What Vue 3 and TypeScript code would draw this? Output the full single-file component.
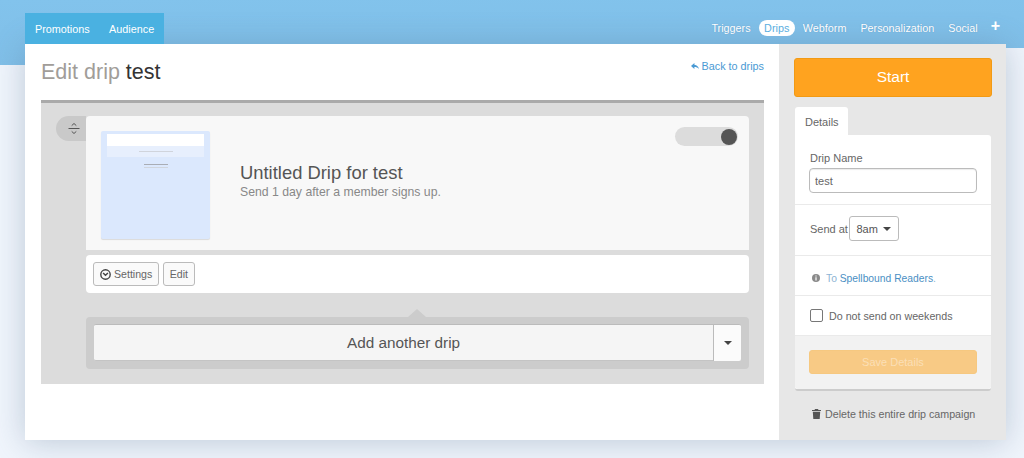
<template>
  <div class="page">
    <div class="top-nav">
      <div class="left-tabs">
        <a v-for="tab in leftTabs" :key="tab">{{ tab }}</a>
      </div>
      <div class="right-tabs">
        <a v-for="tab in rightTabs" :key="tab" :class="{ active: tab === 'Drips' }">{{ tab }}</a>
        <span class="plus">+</span>
      </div>
    </div>

    <div class="shell">
      <main class="main">
        <div class="head">
          <h1>Edit drip <span>test</span></h1>
          <a class="back">
            <svg width="8" height="7" viewBox="0 0 8 7"><path d="M3.4 0 0 2.9l3.4 3V4.100c1.900 0 3.400.4 4.600 2.200C7.600 3.900 6 2 3.400 1.800z" fill="#4a9ad4" /></svg>
            Back to drips
          </a>
        </div>

        <section class="panel">
          <div class="row">
            <div class="handle">
              <svg width="12" height="13" viewBox="0 0 12 13" fill="none" stroke="#555" stroke-width="1">
                <path d="M3.700 3.600 6 1.500 8.300 3.600M3.700 9.400 6 11.500 8.300 9.400" />
                <path d="M.5 6.500h11" />
              </svg>
            </div>
            <div class="stack">
              <div class="card">
                <div class="thumb">
                  <div class="thumb-head">
                    <div class="thumb-white"></div>
                    <div class="thumb-line"></div>
                  </div>
                  <div class="thumb-foot"></div>
                  <div class="thumb-foot small"></div>
                </div>
                <div class="info">
                  <h2>Untitled Drip for test</h2>
                  <p>Send 1 day after a member signs up.</p>
                </div>
                <div class="toggle"><span></span></div>
              </div>
              <div class="actions">
                <button type="button" class="btn">
                  <svg width="11" height="11" viewBox="0 0 11 11" fill="none" stroke="#444" stroke-width="1.400">
                    <circle cx="5.500" cy="5.500" r="4.700" />
                    <path d="M3.100 3.900 5.500 6.300 7.900 3.900" />
                  </svg>
                  Settings
                </button>
                <button type="button" class="btn">Edit</button>
              </div>
              <div class="add-bar">
                <button type="button" class="add-main">Add another drip</button>
                <button type="button" class="add-caret"><i class="caret"></i></button>
              </div>
            </div>
          </div>
        </section>
      </main>

      <aside class="side">
        <button type="button" class="start">Start</button>
        <div class="tab">Details</div>
        <div class="details">
          <div class="sec sec-name">
            <label>Drip Name</label>
            <input type="text" value="test" />
          </div>
          <div class="sec sec-send">
            <span>Send at</span>
            <div class="select">8am <i class="caret"></i></div>
          </div>
          <div class="sec sec-to">
            <svg width="8" height="8" viewBox="0 0 8 8"><circle cx="4" cy="4" r="4" fill="#8a8a8a" /><path d="M3.400 1.500h1.200v1H3.400zM3.400 3.300h1.200v3.200H3.400z" fill="#fff" /></svg>
            <span class="to">To <a>Spellbound Readers</a>.</span>
          </div>
          <div class="sec sec-week">
            <i class="check"></i>
            <span>Do not send on weekends</span>
          </div>
          <div class="sec-save">
            <button type="button" class="save">Save Details</button>
          </div>
        </div>
        <div class="delete">
          <svg width="9" height="10" viewBox="0 0 9 10"><path d="M3 0h3l.500 1H9v1H0V1h2.500zM.800 2.800h7.400L7.700 10H1.300z" fill="#555" /></svg>
          Delete this entire drip campaign
        </div>
      </aside>
    </div>
  </div>
</template>

<script setup lang="ts">
const leftTabs: string[] = ['Promotions', 'Audience']
const rightTabs: string[] = ['Triggers', 'Drips', 'Webform', 'Personalization', 'Social']
</script>

<style>
body {
  margin: 0;
}
</style>

<style scoped>
.page {
  box-sizing: border-box;
  width: 1024px;
  height: 458px;
  padding: 13px 18px 0 25px;
  overflow: hidden;
  font-family: "Liberation Sans", Arial, sans-serif;
  background:
    linear-gradient(179.05deg, #82c3ec 0, #80bfe8 65px, transparent 65px),
    #f0f5fc;
}

.top-nav {
  display: flex;
  justify-content: space-between;
  align-items: flex-start;
  height: 31px;
}

.left-tabs {
  display: flex;
  height: 31px;
  padding: 0 9.500px 0 10px;
  gap: 19.500px;
  background: #4ab1e1;
  align-items: center;
  font-size: 10.800px;
  color: #fff;
}

.right-tabs {
  display: flex;
  align-items: center;
  height: 31px;
  padding-right: 6px;
  font-size: 10.800px;
  color: #fff;
  margin-top: -1px;
}

.right-tabs a {
  padding: 2px 6px;
  margin-right: 2px;
  border-radius: 9px;
  text-shadow: 0 0 1px rgba(60, 120, 170, 0.6);
}

.right-tabs a.active {
  padding: 2px 5.500px;
  background: #fff;
  color: #5aaee0;
  text-shadow: none;
}

.plus {
  margin-left: 5px;
  font-size: 16px;
  font-weight: bold;
  line-height: 16px;
  margin-top: -4px;
}

.shell {
  display: flex;
  height: 396px;
  box-shadow: 0 2px 30px rgba(80, 110, 140, 0.32);
}

.main {
  box-sizing: border-box;
  width: 754px;
  padding: 0 15px 0 16px;
  background: #fff;
}

.head {
  display: flex;
  justify-content: space-between;
  height: 56px;
}

h1 {
  margin: 15px 0 0;
  font-size: 21.500px;
  font-weight: normal;
  line-height: 26px;
  color: #a19d99;
}

h1 span {
  color: #333;
}

.back {
  margin-top: 15px;
  font-size: 10.800px;
  line-height: 14px;
  color: #4a9ad4;
}

.panel {
  box-sizing: border-box;
  height: 284px;
  padding: 13px 15px 0;
  border-top: 3px solid #aaa;
  background: #dcdcdc;
}

.row {
  display: flex;
  align-items: flex-start;
}

.handle {
  display: flex;
  align-items: center;
  justify-content: center;
  box-sizing: border-box;
  width: 30px;
  height: 25px;
  padding-left: 5px;
  border-radius: 13px 0 0 13px;
  background: #c9c9c9;
}

.stack {
  flex: 1;
}

.card {
  display: flex;
  box-sizing: border-box;
  height: 134px;
  padding: 15px 11px 0 15px;
  border-radius: 4px 4px 0 0;
  background: #f8f8f8;
}

.thumb {
  box-sizing: border-box;
  width: 109px;
  height: 108px;
  padding: 3px 0 0;
  border-radius: 2px;
  background: #dbe8fd;
  box-shadow: 0 1px 1px rgba(0, 0, 0, 0.12);
}

.thumb-head {
  margin: 0 6px;
  height: 23px;
  background: #e7effd;
}

.thumb-white {
  height: 12px;
  background: #fff;
}

.thumb-line {
  width: 34px;
  height: 1px;
  margin: 5px auto 0;
  background: #d0d4dc;
}

.thumb-foot {
  width: 24px;
  height: 1px;
  margin: 7px auto 0;
  background: #a9adb5;
}

.thumb-foot.small {
  margin-top: 2px;
  background: #d0d5dd;
}

.info {
  flex: 1;
  margin: 32px 0 0 30px;
}

h2 {
  margin: 0;
  font-size: 18.400px;
  font-weight: normal;
  line-height: 20px;
  color: #555;
}

.info p {
  margin: 2px 0 0;
  font-size: 12.250px;
  line-height: 15px;
  color: #888;
}

.toggle {
  display: flex;
  justify-content: flex-end;
  align-items: center;
  box-sizing: border-box;
  width: 63px;
  height: 19px;
  margin-top: -4px;
  padding-right: 1px;
  border-radius: 10px;
  background: #dcdcdc;
}

.toggle span {
  width: 16px;
  height: 16px;
  border-radius: 50%;
  background: #555;
}

.actions {
  display: flex;
  gap: 4px;
  align-items: center;
  height: 38px;
  margin-top: 5px;
  padding-left: 7px;
  border-radius: 4px;
  background: #fff;
}

.btn {
  display: flex;
  align-items: center;
  gap: 3px;
  height: 24px;
  padding: 0 5.500px 0 6px;
  border: 1px solid #bbb;
  border-radius: 3px;
  background: #fafafa;
  font: 10.600px "Liberation Sans", Arial, sans-serif;
  color: #666;
}

.add-bar {
  position: relative;
  display: flex;
  box-sizing: border-box;
  height: 52px;
  margin-top: 24px;
  padding: 7px 8px 8px;
  border-radius: 4px;
  background: #ccc;
}

.add-bar::before {
  content: "";
  position: absolute;
  left: 322px;
  top: -8px;
  border-left: 9px solid transparent;
  border-right: 9px solid transparent;
  border-bottom: 8px solid #ccc;
}

.add-main {
  flex: 1;
  border: 0;
  border-top: 1px solid #bbb;
  border-bottom: 1px solid #c4c4c4;
  border-radius: 2px 0 0 2px;
  background: #f5f5f5;
  font: 15.300px "Liberation Sans", Arial, sans-serif;
  color: #555;
}

.add-caret {
  display: flex;
  align-items: center;
  justify-content: center;
  width: 28px;
  border: 0;
  border-top: 1px solid #bbb;
  border-left: 1px solid #bbb;
  border-radius: 0 2px 2px 0;
  background: #fbfbfb;
}

.caret {
  display: inline-block;
  border-left: 4px solid transparent;
  border-right: 4px solid transparent;
  border-top: 4.500px solid #444;
}

.side {
  box-sizing: border-box;
  width: 227px;
  padding: 14px 0 0 15px;
  background: #e7e7e7;
}

.start {
  display: block;
  box-sizing: border-box;
  width: 198px;
  height: 39px;
  padding-bottom: 3px;
  border: 1px solid #f29a14;
  border-radius: 3px;
  background: #ffa31f;
  font: 15.500px "Liberation Sans", Arial, sans-serif;
  color: #fff;
}

.tab {
  box-sizing: border-box;
  width: 53px;
  height: 28px;
  margin: 10px 0 0 1px;
  padding: 9px 0 0 10px;
  border-radius: 3px 3px 0 0;
  background: #fff;
  font-size: 11px;
  line-height: 13px;
  color: #666;
}

.details {
  width: 196px;
  margin-left: 1px;
  border-radius: 0 3px 3px 3px;
  border-bottom: 2px solid #ccc;
  background: #fff;
  font-size: 11px;
  color: #666;
}

.sec {
  box-sizing: border-box;
  padding: 0 14px;
  border-bottom: 1px solid #eaeaea;
}

.sec-name {
  height: 70px;
  padding-top: 16px;
}

.sec-name label {
  display: block;
  margin-left: 1px;
  line-height: 14px;
  margin-bottom: 3px;
}

.sec-name input {
  display: block;
  box-sizing: border-box;
  width: 168px;
  height: 25px;
  padding: 0 5px;
  border: 1px solid #bbb;
  border-radius: 4px;
  outline: none;
  box-shadow: inset 0 1px 1px rgba(0, 0, 0, 0.08);
  font: 11px "Liberation Sans", Arial, sans-serif;
  color: #666;
}

.sec-send {
  display: flex;
  align-items: center;
  gap: 1.500px;
  height: 51px;
  padding-bottom: 3px;
  padding-left: 15px;
}

.select {
  display: flex;
  align-items: center;
  justify-content: space-between;
  box-sizing: border-box;
  width: 50px;
  height: 25px;
  padding: 0 7px 0 6px;
  border: 1px solid #bbb;
  border-radius: 3px;
  color: #555;
}

.sec-to {
  display: flex;
  align-items: center;
  gap: 6px;
  height: 40px;
  padding-top: 5px;
  padding-left: 17px;
  font-size: 10.300px;
}

.to {
  color: #8db4d4;
}

.to a {
  color: #4a8fc4;
}

.sec-week {
  display: flex;
  align-items: center;
  gap: 6px;
  height: 40px;
  font-size: 10.700px;
}

.check {
  box-sizing: border-box;
  width: 13px;
  height: 13px;
  margin-left: 1px;
  border: 1px solid #777;
  border-radius: 2px;
  background: #fff;
}

.sec-save {
  box-sizing: border-box;
  height: 53px;
  padding: 14px 14px 0;
  border-radius: 0 0 3px 3px;
  background: #f2f2f2;
}

.save {
  display: block;
  width: 168px;
  height: 24px;
  border: 1px solid #f6c880;
  border-radius: 3px;
  background: #f8ca85;
  font: 11px "Liberation Sans", Arial, sans-serif;
  color: #fbdfb6;
}

.delete {
  display: flex;
  align-items: center;
  gap: 4px;
  margin: 16px 0 0 18px;
  font-size: 10.700px;
  line-height: 14px;
  color: #666;
}
</style>
